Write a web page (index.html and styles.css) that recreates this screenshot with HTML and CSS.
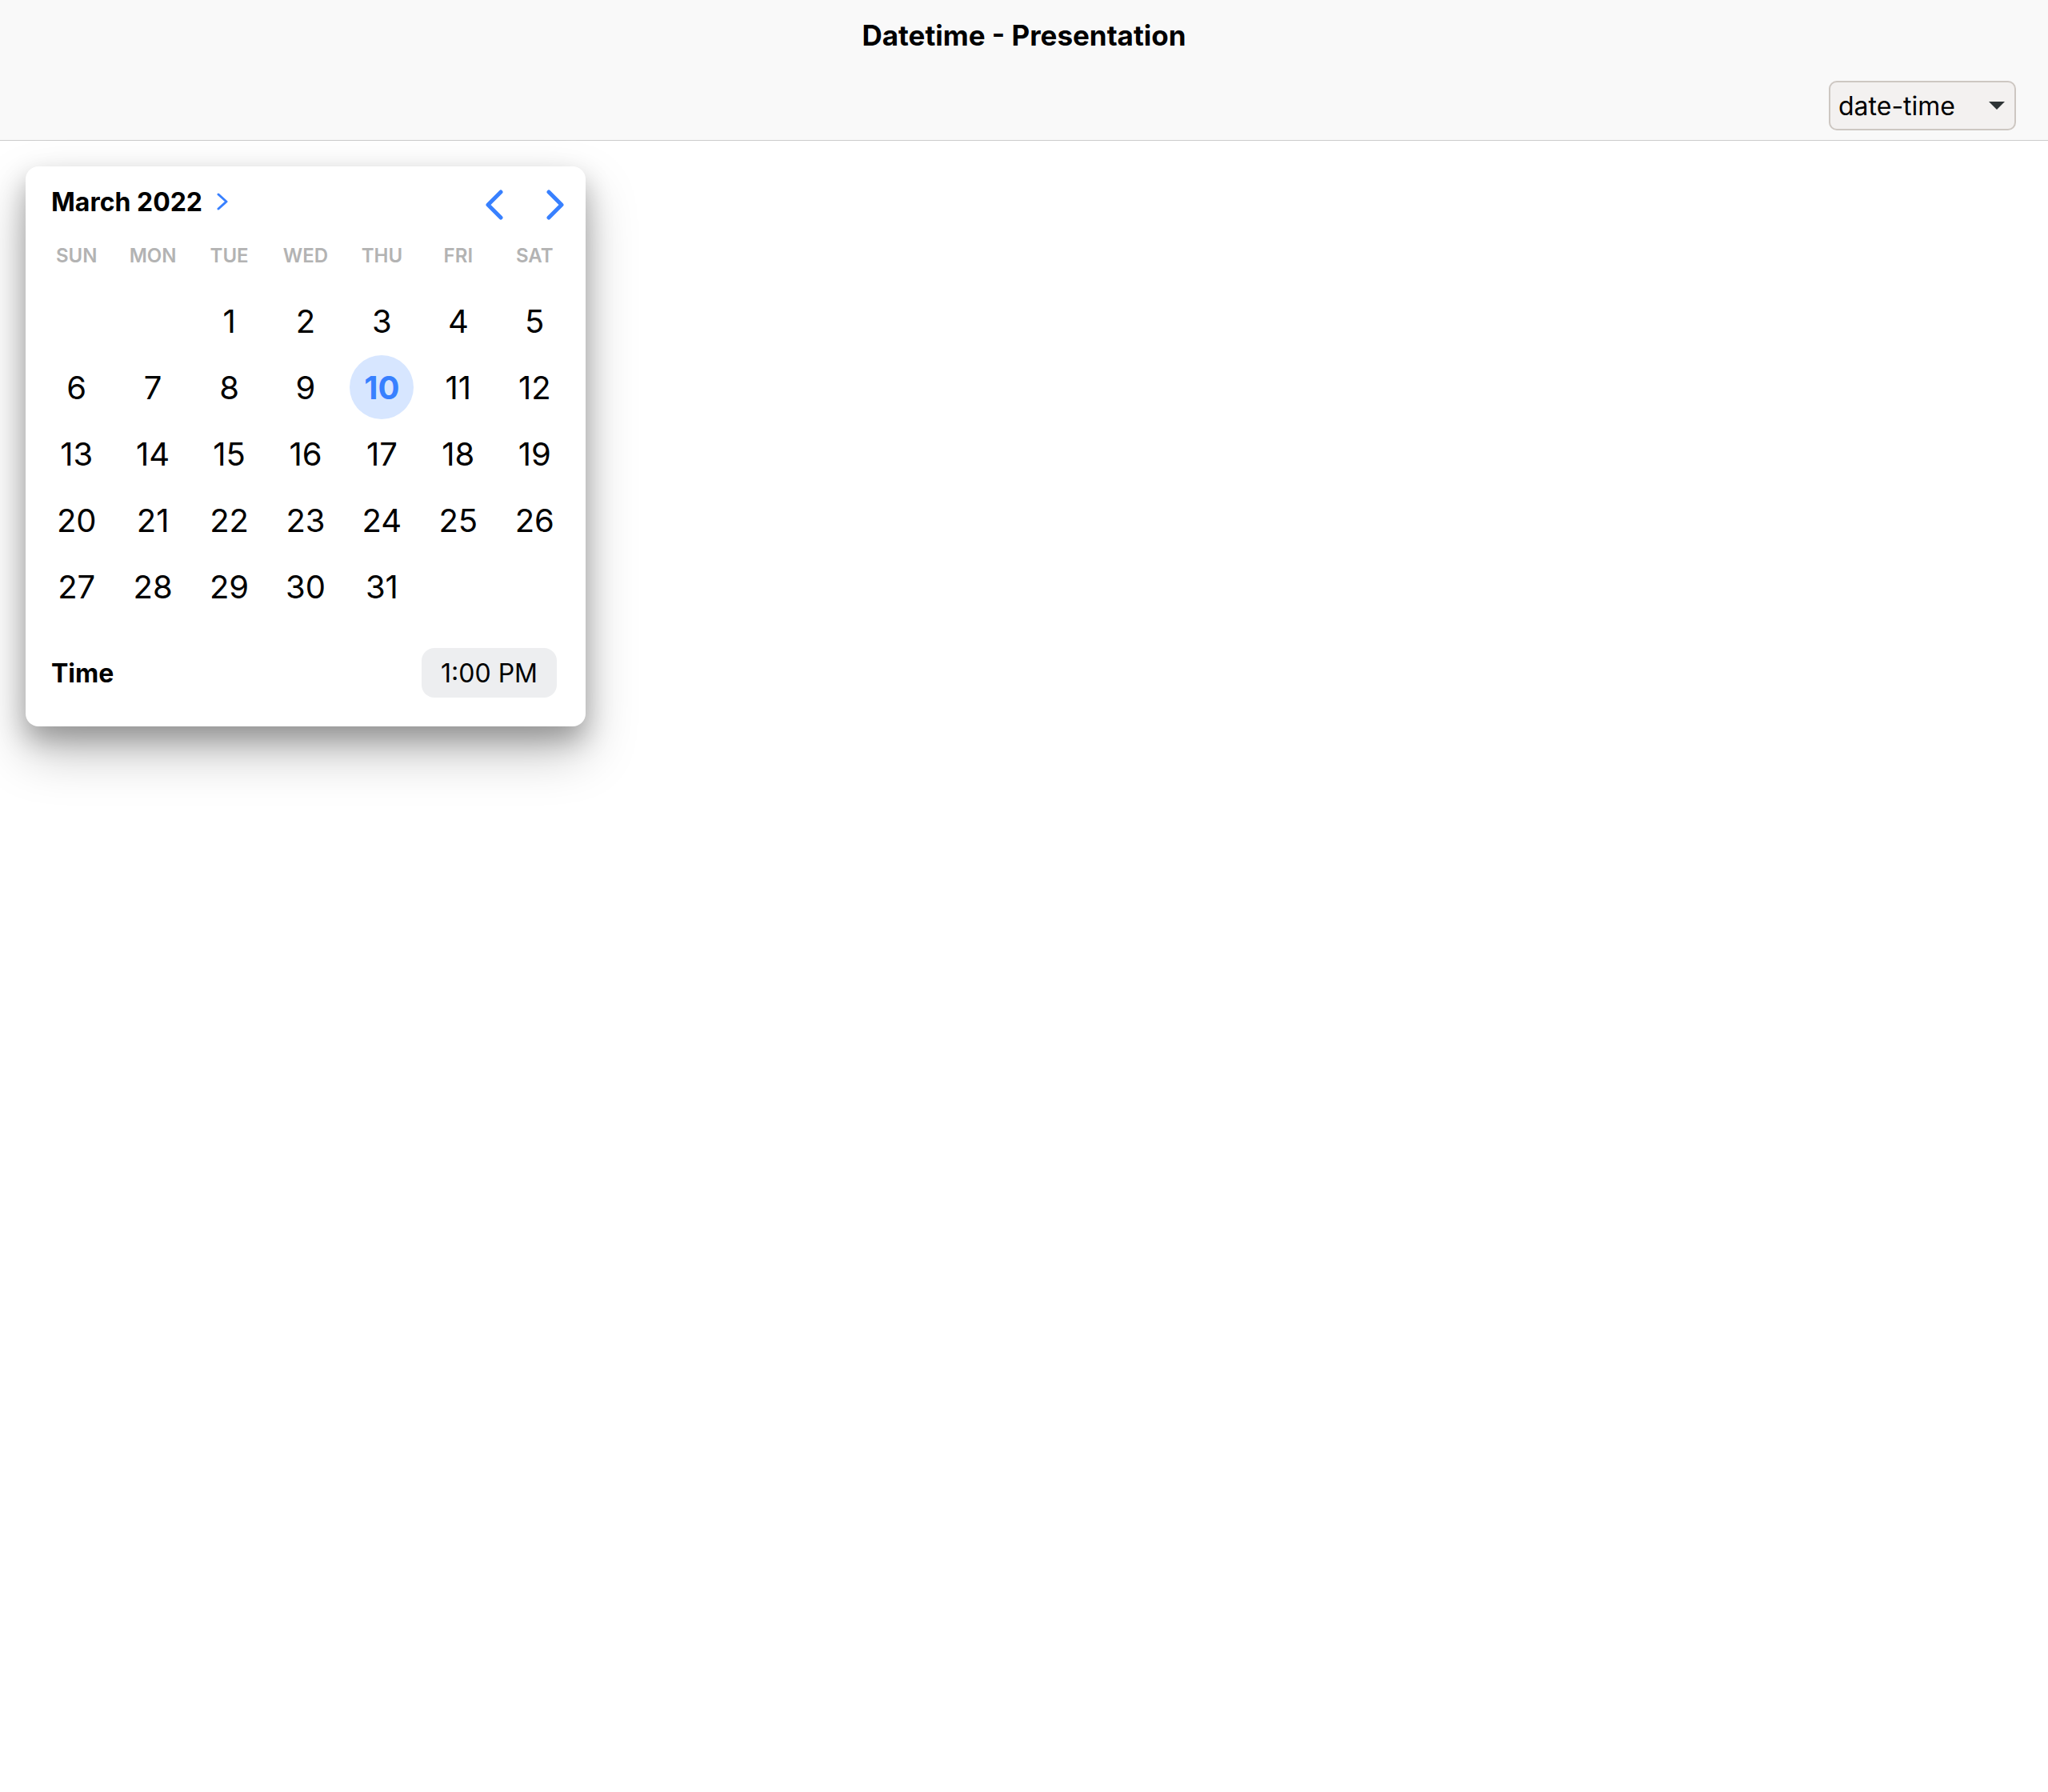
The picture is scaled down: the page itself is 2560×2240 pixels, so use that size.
FILE: index.html
```html
<!DOCTYPE html>
<html lang="en">
<head>
  <meta charset="utf-8">
  <meta name="viewport" content="width=device-width, initial-scale=1">
  <title>Datetime - Presentation</title>
  <link rel="stylesheet" href="styles.css">
</head>
<body>
  <header class="header">
    <h1 class="title">Datetime - Presentation</h1>
    <div class="toolbar">
      <div class="select-wrap">
        <select class="select" aria-label="Presentation">
          <option selected>date-time</option>
          <option>time-date</option>
          <option>date</option>
          <option>time</option>
        </select>
        <svg class="select-arrow" viewBox="0 0 20 10" aria-hidden="true"><path d="M0 0H20L10 10Z"/></svg>
      </div>
    </div>
  </header>
  <main class="content">
    <section class="datetime">
      <div class="calendar-header">
        <button class="month-year" type="button">
          March 2022
          <svg class="month-chevron" viewBox="0 0 14 22" aria-hidden="true"><path d="M2 2L12 11L2 20"/></svg>
        </button>
        <div class="nav">
          <button class="nav-button" type="button" aria-label="Previous month">
            <svg class="nav-icon" viewBox="0 0 22 38" aria-hidden="true"><path d="M19 3L3 19L19 35"/></svg>
          </button>
          <button class="nav-button" type="button" aria-label="Next month">
            <svg class="nav-icon" viewBox="0 0 22 38" aria-hidden="true"><path d="M3 3L19 19L3 35"/></svg>
          </button>
        </div>
      </div>
      <table class="calendar">
        <thead>
          <tr><th>SUN</th><th>MON</th><th>TUE</th><th>WED</th><th>THU</th><th>FRI</th><th>SAT</th></tr>
        </thead>
        <tbody>
          <tr>
            <td></td><td></td>
            <td><button class="day" type="button">1</button></td>
            <td><button class="day" type="button">2</button></td>
            <td><button class="day" type="button">3</button></td>
            <td><button class="day" type="button">4</button></td>
            <td><button class="day" type="button">5</button></td>
          </tr>
          <tr>
            <td><button class="day" type="button">6</button></td>
            <td><button class="day" type="button">7</button></td>
            <td><button class="day" type="button">8</button></td>
            <td><button class="day" type="button">9</button></td>
            <td><button class="day day-selected" type="button" aria-current="date">10</button></td>
            <td><button class="day" type="button">11</button></td>
            <td><button class="day" type="button">12</button></td>
          </tr>
          <tr>
            <td><button class="day" type="button">13</button></td>
            <td><button class="day" type="button">14</button></td>
            <td><button class="day" type="button">15</button></td>
            <td><button class="day" type="button">16</button></td>
            <td><button class="day" type="button">17</button></td>
            <td><button class="day" type="button">18</button></td>
            <td><button class="day" type="button">19</button></td>
          </tr>
          <tr>
            <td><button class="day" type="button">20</button></td>
            <td><button class="day" type="button">21</button></td>
            <td><button class="day" type="button">22</button></td>
            <td><button class="day" type="button">23</button></td>
            <td><button class="day" type="button">24</button></td>
            <td><button class="day" type="button">25</button></td>
            <td><button class="day" type="button">26</button></td>
          </tr>
          <tr>
            <td><button class="day" type="button">27</button></td>
            <td><button class="day" type="button">28</button></td>
            <td><button class="day" type="button">29</button></td>
            <td><button class="day" type="button">30</button></td>
            <td><button class="day" type="button">31</button></td>
            <td></td><td></td>
          </tr>
        </tbody>
      </table>
      <div class="time">
        <span class="time-label" id="time-label">Time</span>
        <button class="time-button" id="time-button" type="button" aria-labelledby="time-label time-button">1:00 PM</button>
      </div>
    </section>
  </main>
</body>
</html>
```

FILE: styles.css
```css
:root {
  --primary: #3880ff;
}

* {
  box-sizing: border-box;
}

body {
  display: flex;
  flex-direction: column;
  min-height: 100vh;
  margin: 0;
  background: #fff;
  color: #000;
  font-family: Inter, "Liberation Sans", sans-serif;
  font-size: 32px;
}

button,
select {
  margin: 0;
  padding: 0;
  border: 0;
  background: none;
  color: inherit;
  font: inherit;
}

svg {
  display: block;
}

/* Header */
.header {
  background: #f9f9f9;
  border-bottom: 1px solid #cdcdcd;
}

.title {
  margin: 0;
  font-size: 35px;
  font-weight: 700;
  line-height: 88px;
  text-align: center;
}

.toolbar {
  display: flex;
  justify-content: flex-end;
  padding: 13px 40px 12px;
}

.select-wrap {
  display: grid;
  align-items: center;
  width: 234px;
}

.select {
  grid-area: 1 / 1;
  width: 100%;
  height: 62px;
  padding: 0 10px;
  border: 2px solid #cdc7c2;
  border-radius: 10px;
  background: #f3f1f0;
  appearance: none;
}

.select-arrow {
  grid-area: 1 / 1;
  justify-self: end;
  width: 20px;
  margin-right: 14px;
  fill: #2e3436;
  pointer-events: none;
}

/* Date and time picker */
.content {
  flex: 1;
  padding: 32px;
}

.datetime {
  max-width: 700px;
  border-radius: 16px;
  background: #fff;
  box-shadow: 0 32px 64px rgba(0, 0, 0, 0.25), 0 16px 32px rgba(0, 0, 0, 0.25);
}

.calendar-header {
  display: flex;
  justify-content: space-between;
  height: 88px;
  padding-left: 32px;
}

.month-year {
  display: flex;
  align-items: center;
  gap: 18px;
  font-weight: 700;
}

.month-chevron {
  width: 14px;
  fill: none;
  stroke: var(--primary);
  stroke-width: 3;
  stroke-linecap: round;
  stroke-linejoin: round;
}

.nav {
  display: flex;
  padding-top: 8px;
}

.nav-button {
  display: grid;
  place-items: center;
  width: 76px;
}

.nav-icon {
  width: 22px;
  fill: none;
  stroke: var(--primary);
  stroke-width: 5;
  stroke-linecap: round;
  stroke-linejoin: round;
}

.calendar {
  width: 100%;
  padding: 0 16px;
  border-spacing: 0;
  table-layout: fixed;
}

.calendar th {
  padding: 0 0 16px;
  color: #b3b3b3;
  font-size: 24px;
  font-weight: 600;
  line-height: 48px;
}

.calendar td {
  padding: 1px 0 2px;
}

.day {
  display: block;
  width: 80px;
  height: 80px;
  margin: 0 auto;
  border-radius: 50%;
  font-size: 40px;
  text-align: center;
}

.day-selected {
  background: #d7e6ff;
  color: var(--primary);
  font-weight: 700;
}

.time {
  display: flex;
  align-items: center;
  justify-content: space-between;
  padding: 35px 36px 36px 32px;
}

.time-label {
  font-weight: 700;
}

.time-button {
  height: 62px;
  padding: 0 24px;
  border-radius: 16px;
  background: #edeef0;
}
```
